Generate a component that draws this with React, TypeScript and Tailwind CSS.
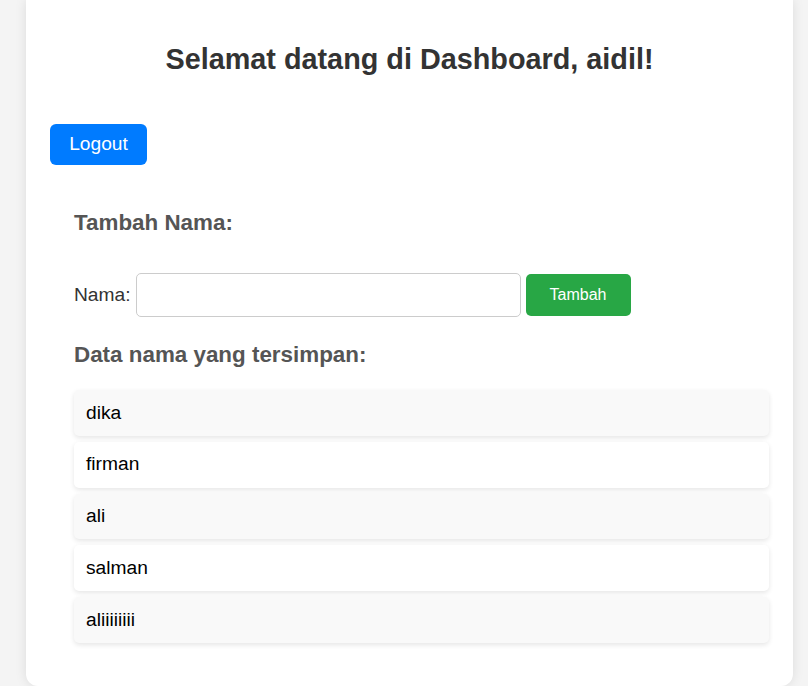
import React, { useState } from "react";

const NAMES = ["dika", "firman", "ali", "salman", "aliiiiiiii"];

const App: React.FC = () => {
  const [nama, setNama] = useState("");

  return (
    <div
      className="h-[686px] overflow-hidden bg-[#f4f4f4] pl-[26px]"
      style={{ fontFamily: '"Liberation Sans", Arial, sans-serif' }}
    >
      <div className="h-[686px] w-[767px] rounded-b-[12px] bg-white px-[24px] shadow-[0_0_12px_rgba(0,0,0,0.1)]">
        <h2 className="pt-[42px] text-center text-[28.8px] font-bold leading-[34px] text-[#333]">
          Selamat datang di Dashboard, aidil!
        </h2>

        <button className="mt-[48px] h-[41px] w-[97px] rounded-[6px] bg-[#007bff] text-[19.2px] text-white">
          Logout
        </button>

        <div className="pl-[24px]">
          <h3 className="mt-[45px] text-[22.4px] font-bold leading-[26px] text-[#555]">
            Tambah Nama:
          </h3>

          <div className="mt-[37px] flex items-center gap-[5px]">
            <label className="text-[19.2px] text-[#333]">Nama:</label>
            <input
              value={nama}
              onChange={(e) => setNama(e.target.value)}
              className="h-[44px] w-[385px] rounded-[5px] border border-[#ccc] px-2 text-[19.2px] outline-none"
            />
            <button className="h-[42px] w-[105px] rounded-[5px] bg-[#28a745] text-[16px] text-white">
              Tambah
            </button>
          </div>

          <h3 className="mt-[25px] text-[22.4px] font-bold leading-[26px] text-[#555]">
            Data nama yang tersimpan:
          </h3>

          <ul className="mt-[22px] flex flex-col gap-[6px]">
            {NAMES.map((name, i) => (
              <li
                key={i}
                className={`flex h-[45.8px] items-center rounded-[5px] px-[12px] text-[19.2px] text-black shadow-[0_2px_5px_rgba(0,0,0,0.1)] ${
                  i % 2 === 0 ? "bg-[#f9f9f9]" : "bg-white"
                }`}
              >
                {name}
              </li>
            ))}
          </ul>
        </div>
      </div>
    </div>
  );
};

export default App;
